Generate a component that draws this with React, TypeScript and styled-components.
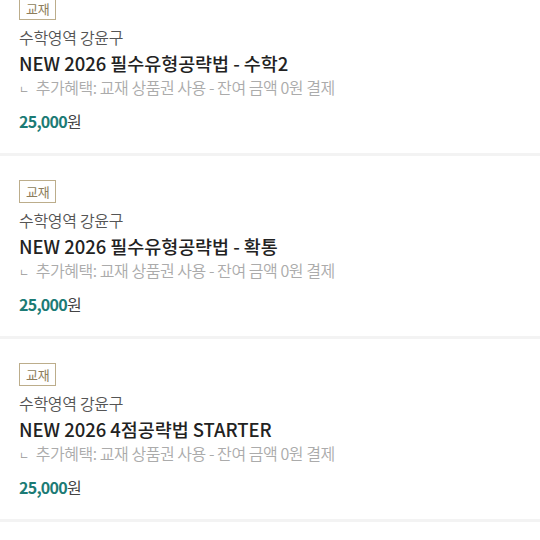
import React from "react";
import styled, { createGlobalStyle } from "styled-components";

const Global = createGlobalStyle`
  html, body { margin: 0; padding: 0; background: #ffffff; }
  body { font-family: "Noto Sans CJK KR", "Noto Sans", sans-serif; overflow: hidden; }
`;

const List = styled.div`
  display: flex;
  flex-direction: column;
  margin-top: -27px;
`;

const Card = styled.div`
  display: flex;
  flex-direction: column;
  align-items: flex-start;
  padding: 24px 19px 20px;
  border-bottom: 3px solid #f3f3f3;
`;

const Badge = styled.span`
  box-sizing: border-box;
  height: 23px;
  padding: 0 6px;
  display: inline-flex;
  align-items: center;
  border: 1.5px solid #bcad8b;
  color: #8d7d5b;
  font-size: 13px;
  letter-spacing: -0.3px;
  line-height: 1;
`;

const Teacher = styled.div`
  margin-top: 5px;
  font-size: 16px;
  font-weight: 350;
  line-height: 24px;
  color: #555555;
  letter-spacing: -0.3px;
`;

const Title = styled.div`
  margin-top: 2px;
  font-size: 18.5px;
  line-height: 24px;
  font-weight: 500;
  color: #222222;
  letter-spacing: -0.05px;
`;

const Benefit = styled.div`
  height: 24px;
  font-size: 16px;
  font-weight: 350;
  line-height: 24px;
  color: #ababab;
  letter-spacing: -0.45px;
  white-space: nowrap;
`;

const Corner = styled.span`
  font-size: 11px;
  line-height: 1;
  color: #999999;
  margin-right: 7px;
`;

const Price = styled.div`
  margin-top: 10px;
  font-size: 16px;
  line-height: 24px;
  color: #444444;
  letter-spacing: -0.75px;
`;

const Amount = styled.strong`
  font-weight: 700;
  color: #1c7b75;
`;

const items = [
  "NEW 2026 필수유형공략법 - 수학2",
  "NEW 2026 필수유형공략법 - 확통",
  "NEW 2026 4점공략법 STARTER",
];

export default function App() {
  return (
    <>
      <Global />
      <List>
        {items.map((t) => (
          <Card key={t}>
            <Badge>교재</Badge>
            <Teacher>수학영역 강윤구</Teacher>
            <Title>{t}</Title>
            <Benefit>
              <Corner>ㄴ</Corner>추가혜택: 교재 상품권 사용 - 잔여 금액 0원 결제
            </Benefit>
            <Price>
              <Amount>25,000</Amount>원
            </Price>
          </Card>
        ))}
      </List>
    </>
  );
}
